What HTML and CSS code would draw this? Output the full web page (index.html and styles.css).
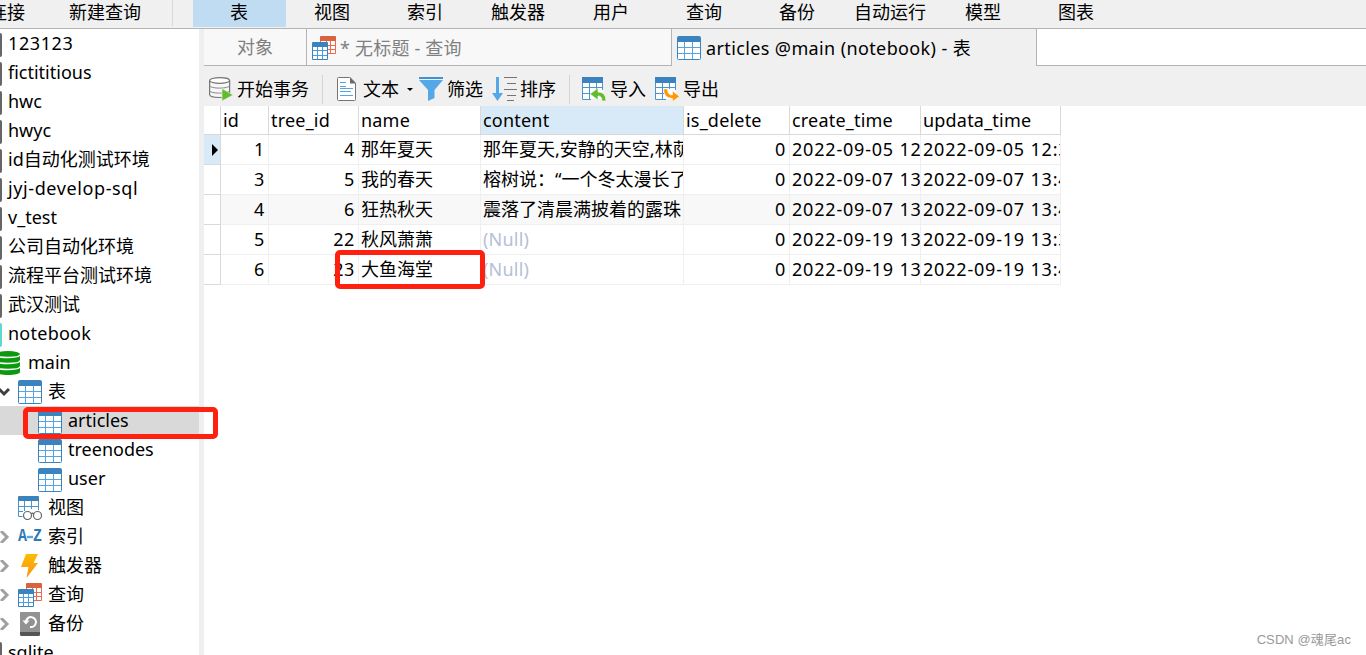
FILE: index.html
```html
<!DOCTYPE html>
<html lang="zh-CN">
<head>
  <meta charset="UTF-8" />
  <meta name="viewport" content="width=device-width, initial-scale=1.0"/>
  <title>articles @main (notebook) - 表</title>
  <link rel="stylesheet" href="styles.css">
</head>
<body>
  <!-- icons -->
  <svg class="defs" width="0" height="0">
    <linearGradient id="bolt-fill" x1="0" y1="0" x2="0" y2="1">
      <stop offset="0" stop-color="#f9bd00"/><stop offset="1" stop-color="#ff9114"/>
    </linearGradient>
    <symbol id="i-table" viewBox="0 0 24 24">
      <path fill="#fff" stroke="#3b83be" d="M.5 5h23v17.5a1 1 0 0 1-1 1h-21a1 1 0 0 1-1-1z"/>
      <path stroke="#55a5e4" d="M1 11.5h22M1 17.5h22M7.5 6v17M15.500 6v17"/>
      <path fill="#3b83be" d="M0 6V2q0-2 2-2h20q2 0 2 2v4z"/>
    </symbol>
    <symbol id="i-query" viewBox="0 0 24 24">
      <path fill="#fff" stroke="#e96b50" d="M8.500 1.500h15v16h-15z"/>
      <path stroke="#e96b50" d="M9 9.500h14M9 13.500h14M14.500 5v12M18.500 5v12"/>
      <path fill="#d9623f" d="M8 5V1q0-1 1-1h14q1 0 1 1v4z"/>
      <path fill="#fff" stroke="#3b83be" d="M.5 7.500h15v16H.5z"/>
      <path stroke="#4a9ede" d="M1 14.500h14M1 19.500h14M5.500 11v12M10.500 11v12"/>
      <path fill="#3b83be" d="M0 11V7q0-1 1-1h14q1 0 1 1v4z"/>
    </symbol>
    <symbol id="i-view" viewBox="0 0 24 24">
      <path fill="#fff" d="M0 5h21v9H6v7H0z"/>
      <path fill="none" stroke="#4a94d0" d="M.5 5v15.500h4M20.500 5v9M1 10.500h19M1 15.500h4M6.500 5v10M13.500 5v8"/>
      <path fill="#3b83be" d="M0 5V1q0-1 1-1h19q1 0 1 1v4z"/>
      <g fill="#fff" stroke="#686868" stroke-width="1.200"><circle cx="9.500" cy="19.500" r="4"/><circle cx="19.500" cy="19.500" r="4"/><path d="M13 18q1.500-1.500 3 0"/></g>
    </symbol>
    <symbol id="i-bolt" viewBox="0 0 24 24">
      <path fill="url(#bolt-fill)" d="M8 0h12l-4.500 9H20L8.500 24l2-11H3z"/>
    </symbol>
    <symbol id="i-backup" viewBox="0 0 24 24">
      <rect x="2" width="20" height="24" rx="1.500" fill="#555"/>
      <path fill="#929292" d="M2 20V1.500Q2 0 3.500 0h17Q22 0 22 1.500V20z"/>
      <path fill="none" stroke="#fff" stroke-width="2" d="M8 9.500A5 5 0 1 1 12 15"/>
      <path fill="#fff" d="M4.500 8.500h7l-3.500 4z"/>
    </symbol>
    <symbol id="i-db" viewBox="0 0 24 24">
      <path fill="#0c980f" d="M0 3v18c0 4 24 4 24 0V3z"/>
      <ellipse cx="12" cy="3" rx="12" ry="3" fill="#0c980f"/>
      <path fill="none" stroke="#fff" stroke-width="1.500" d="M0 3.500c0 4 24 4 24 0M0 9.500c0 4 24 4 24 0M0 15.500c0 4 24 4 24 0"/>
    </symbol>
    <symbol id="i-begin" viewBox="0 0 24 24">
      <path fill="#f7f7f7" stroke="#747474" stroke-width="1.200" d="M.6 3.500v14c0 1.800 4.500 3 10 3s10-1.200 10-3v-14"/>
      <ellipse cx="10.600" cy="3.500" rx="10" ry="2.800" fill="#fff" stroke="#747474" stroke-width="1.200"/>
      <path fill="none" stroke="#888" d="M.6 8.500c0 3.500 20 3.500 20 0M.6 13.500c0 3.500 20 3.500 20 0"/>
      <path fill="#62bd2c" stroke="#f0f0f0" stroke-width=".6" d="M13 11.500L24 18l-11 6z"/>
    </symbol>
    <symbol id="i-text" viewBox="0 0 20 24">
      <path fill="#fff" stroke="#747474" d="M1.500.5h11L18.500 6v16.500q0 1-1 1h-16q-1 0-1-1v-21q0-1 1-1z"/>
      <path fill="#6c6c6c" d="M13 0l6 6.500h-6z"/>
      <path stroke="#55a5e4" d="M3 5.500h6M3 9.500h6M3 11.500h13M3 14.500h11M3 18.500h13"/>
    </symbol>
    <symbol id="i-filter" viewBox="0 0 24 24">
      <path fill="#3b94d9" d="M0 0h24v2H0z"/>
      <path fill="#55a8e8" d="M0 3h24l-8.500 10v8L9 24V13z"/>
    </symbol>
    <symbol id="i-sort" viewBox="0 0 25 24">
      <path fill="#55a8e8" d="M4 0h3v16h4L5.500 24 0 16h4z"/>
      <path stroke="#747474" d="M12 .5h13M15 6.500h9M12 12.500h13M15 18.500h9M15 23.500h7"/>
    </symbol>
    <symbol id="i-import" viewBox="0 0 24 24">
      <path fill="#fff" d="M0 5h21v17H0z"/>
      <path fill="none" stroke="#4a94d0" d="M20.500 5v8M.5 5v17.500H9M1 10.500h19M1 16.500h8M7.500 5v17M14.500 5v8"/>
      <path fill="#3b83be" d="M0 6V0h21v6z"/>
      <path fill="#62bd2c" stroke="#f5f5f5" stroke-width=".7" d="M8 17l8-6v4q8 0 8 9h-4q0-5-4-5v4z"/>
    </symbol>
    <symbol id="i-export" viewBox="0 0 24 24">
      <path fill="#fff" d="M0 5h21v17H0z"/>
      <path fill="none" stroke="#4a94d0" d="M20.500 5v8M.5 5v17.500H11M1 10.500h19M1 16.500h8M7.500 5v17M14.500 5v7"/>
      <path fill="#3b83be" d="M0 6V0h21v6z"/>
      <path fill="#ff9800" stroke="#f5f5f5" stroke-width=".7" d="M8.500 12h4q0 6 5 6v-4l7 5.500-7 5v-3q-9-.5-9-9.500z"/>
    </symbol>
  </svg>

  <nav class="menubar">
    <span class="connect">连接</span>
    <span class="new-query">新建查询</span>
    <div class="menu-items">
      <span class="active">表</span>
      <span>视图</span>
      <span>索引</span>
      <span>触发器</span>
      <span>用户</span>
      <span>查询</span>
      <span>备份</span>
      <span>自动运行</span>
      <span>模型</span>
      <span>图表</span>
    </div>
  </nav>

  <div class="workspace">
    <aside class="sidebar">
      <ul class="tree">
        <li class="conn num">123123</li>
        <li class="conn">fictititious</li>
        <li class="conn">hwc</li>
        <li class="conn">hwyc</li>
        <li class="conn">id自动化测试环境</li>
        <li class="conn wide">jyj-develop-sql</li>
        <li class="conn">v_test</li>
        <li class="conn">公司自动化环境</li>
        <li class="conn">流程平台测试环境</li>
        <li class="conn">武汉测试</li>
        <li class="conn open">notebook</li>
        <li class="db"><svg class="icon"><use href="#i-db"/></svg>main</li>
        <li class="group"><svg class="arrow down" viewBox="0 0 12 12"><path d="M1 3l5 5 5-5"/></svg><svg class="icon"><use href="#i-table"/></svg>表</li>
        <li class="leaf selected"><svg class="icon"><use href="#i-table"/></svg>articles</li>
        <li class="leaf"><svg class="icon"><use href="#i-table"/></svg>treenodes</li>
        <li class="leaf"><svg class="icon"><use href="#i-table"/></svg>user</li>
        <li class="group"><span class="arrow"></span><svg class="icon"><use href="#i-view"/></svg>视图</li>
        <li class="group"><svg class="arrow" viewBox="0 0 12 12"><path d="M3 0l6 6-6 6"/></svg><span class="icon az">A<i></i>Z</span>索引</li>
        <li class="group"><svg class="arrow" viewBox="0 0 12 12"><path d="M3 0l6 6-6 6"/></svg><svg class="icon"><use href="#i-bolt"/></svg>触发器</li>
        <li class="group"><svg class="arrow" viewBox="0 0 12 12"><path d="M3 0l6 6-6 6"/></svg><svg class="icon"><use href="#i-query"/></svg>查询</li>
        <li class="group"><svg class="arrow" viewBox="0 0 12 12"><path d="M3 0l6 6-6 6"/></svg><svg class="icon"><use href="#i-backup"/></svg>备份</li>
        <li class="conn">sqlite</li>
      </ul>
    </aside>

    <main>
      <div class="tabs">
        <div class="tab objects">对象</div>
        <div class="tab query"><svg class="icon"><use href="#i-query"/></svg><span>* 无标题 - 查询</span></div>
        <div class="tab current"><svg class="icon"><use href="#i-table"/></svg>articles @main (notebook) - 表</div>
        <div class="tab-rest"></div>
      </div>

      <div class="toolbar">
        <button class="begin"><svg class="icon"><use href="#i-begin"/></svg>开始事务</button>
        <i class="sep"></i>
        <button class="text"><svg class="icon"><use href="#i-text"/></svg>文本<b class="caret"></b></button>
        <button class="filter"><svg class="icon"><use href="#i-filter"/></svg>筛选</button>
        <button class="sort"><svg class="icon"><use href="#i-sort"/></svg>排序</button>
        <i class="sep"></i>
        <button class="import"><svg class="icon"><use href="#i-import"/></svg>导入</button>
        <button class="export"><svg class="icon"><use href="#i-export"/></svg>导出</button>
      </div>

      <table class="grid">
        <colgroup>
          <col class="c-mark"><col class="c-id"><col class="c-tree"><col class="c-name">
          <col class="c-content"><col class="c-del"><col class="c-create"><col class="c-update">
        </colgroup>
        <thead>
          <tr><th></th><th>id</th><th>tree_id</th><th>name</th><th class="sel">content</th><th>is_delete</th><th>create_time</th><th>updata_time</th></tr>
        </thead>
        <tbody>
          <tr>
            <td class="mark sel"><b class="pointer"></b></td><td class="n">1</td><td class="n">4</td><td>那年夏天</td>
            <td>那年夏天,安静的天空,林荫</td><td class="n">0</td><td class="date">2022-09-05 12</td><td class="date">2022-09-05 12:3</td>
          </tr>
          <tr>
            <td class="mark"></td><td class="n">3</td><td class="n">5</td><td>我的春天</td>
            <td>榕树说：<q>“</q>一个冬太漫长了</td><td class="n">0</td><td class="date">2022-09-07 13</td><td class="date">2022-09-07 13:4</td>
          </tr>
          <tr class="alt">
            <td class="mark"></td><td class="n">4</td><td class="n">6</td><td>狂热秋天</td>
            <td>震落了清晨满披着的露珠</td><td class="n">0</td><td class="date">2022-09-07 13</td><td class="date">2022-09-07 13:4</td>
          </tr>
          <tr>
            <td class="mark"></td><td class="n">5</td><td class="n">22</td><td>秋风萧萧</td>
            <td class="null">(Null)</td><td class="n">0</td><td class="date">2022-09-19 13</td><td class="date">2022-09-19 13:3</td>
          </tr>
          <tr>
            <td class="mark"></td><td class="n">6</td><td class="n">23</td><td>大鱼海堂</td>
            <td class="null">(Null)</td><td class="n">0</td><td class="date">2022-09-19 13</td><td class="date">2022-09-19 13:4</td>
          </tr>
        </tbody>
      </table>
    </main>
  </div>

  <div class="highlight highlight-tree"></div>
  <div class="highlight highlight-cell"></div>
  <div class="watermark">CSDN @魂尾ac</div>
</body>
</html>
```
FILE: styles.css
```css
:root {
  --bar: #f0f0f0;
  --line: #b4b4b4;
  --sel: #d8eaf8;
  --mark: #ff2010;
}

* {
  margin: 0;
  padding: 0;
  box-sizing: border-box;
}

body {
  height: 655px;
  overflow: hidden;
  position: relative;
  background: #fff;
  color: #000;
  font: 18px/24px "Noto Sans", "Noto Sans CJK SC", sans-serif;
  white-space: nowrap;
}

.defs {
  position: absolute;
}

.icon {
  width: 24px;
  height: 24px;
  flex: none;
}

/* top menu */
.menubar {
  display: flex;
  height: 29px;
  background: var(--bar);
  border-bottom: 1px solid var(--line);
}

.connect {
  margin-left: -11px;
  width: 80px;
}

.new-query {
  width: 104px;
  height: 26px;
  border-right: 1px solid #d9d9d9;
}

.menu-items {
  display: flex;
  margin-left: 20px;
}

.menu-items span {
  width: 93px;
  height: 27px;
  padding-right: 1px;
  text-align: center;
}

.menu-items .active {
  background: #c0dcf3;
}

.workspace {
  display: flex;
  height: 626px;
}

/* connection tree */
.sidebar {
  width: 204px;
  flex: none;
  border-right: 5px solid #efefef;
  overflow: hidden;
}

.tree {
  list-style: none;
}

.tree li {
  display: flex;
  align-items: center;
  height: 29px;
  padding-bottom: 2px;
}

.tree .conn::before {
  content: "";
  width: 2px;
  height: 24px;
  margin: 4px 6px 0 0;
  background: #666;
  border-radius: 0 2px 2px 0;
}

.tree .open::before {
  background: #5fd9cf;
}

.tree .num,
.tree .wide {
  letter-spacing: 0.6px;
}

.tree .open {
  letter-spacing: 0.25px;
}

.tree .db .icon {
  margin: 2px 8px 0 -4px;
}

.tree .group .icon {
  margin: 2px 6px 0 0;
}

.tree .leaf {
  padding-left: 38px;
}

.tree .leaf .icon {
  margin: 4px 6px 0 0;
}

.tree .selected {
  background: #d9d9d9;
}

.arrow {
  width: 12px;
  height: 12px;
  margin: 3px 8px 0 -2px;
  fill: none;
  stroke: #a0a0a0;
  stroke-width: 3;
}

.arrow.down {
  stroke: #404040;
}

.az {
  display: flex;
  align-items: center;
  justify-content: space-between;
  color: #2e79b5;
  font: bold 15px/24px "Liberation Mono", monospace;
  transform: scaleY(1.2);
}

.az i {
  width: 6px;
  height: 2px;
  background: #55a5e4;
}

main {
  flex: 1;
  min-width: 0;
}

/* document tabs */
.tabs {
  display: flex;
  height: 37px;
  background: var(--bar);
}

.tab {
  display: flex;
  align-items: center;
}

.objects,
.query {
  background: #f8f8f8;
  color: #808080;
  border-right: 1px solid var(--line);
  border-bottom: 1px solid var(--line);
}

.objects {
  width: 103px;
  justify-content: center;
}

.query {
  width: 365px;
  padding: 1px 5px 0;
}

.query span {
  margin-left: -1px;
  letter-spacing: 0.2px;
}

.current {
  width: 364px;
  padding-left: 5px;
  letter-spacing: 0.38px;
}

.tab .icon {
  margin-right: 5px;
}

.tab-rest {
  flex: 1;
  background: #fff;
  border-left: 1px solid var(--line);
  border-bottom: 1px solid var(--line);
}

.toolbar {
  display: flex;
  align-items: center;
  height: 40px;
  padding: 6px 0 0 5px;
  background: var(--bar);
}

.toolbar button {
  display: flex;
  align-items: center;
  border: none;
  background: none;
  font: inherit;
  color: inherit;
}

.toolbar .icon {
  margin-right: 4px;
}

.sep {
  width: 1px;
  height: 29px;
  margin: 0 12px 0 13px;
  background: #d4d4d4;
}

.toolbar .text .icon {
  width: 20px;
  margin: 0 6px 0 2px;
}

.caret {
  margin: 0 6px 0 8px;
  border: 3px solid transparent;
  border-top-color: #000;
  border-bottom: none;
}

.toolbar .sort {
  margin-left: 9px;
}

.toolbar .sort .icon {
  width: 25px;
  margin-right: 3px;
}

.toolbar .export {
  margin-left: 9px;
}

/* data grid */
.grid {
  width: 857px;
  table-layout: fixed;
  border-collapse: separate;
  border-spacing: 0;
}

.c-mark { width: 17px; }
.c-id { width: 48px; }
.c-tree { width: 90px; }
.c-name { width: 122px; }
.c-content { width: 203px; }
.c-del { width: 106px; }
.c-create { width: 131px; }
.c-update { width: 140px; }

.grid th,
.grid td {
  padding: 0 0 0 2px;
  overflow: hidden;
  text-align: left;
  font-weight: normal;
}

.grid th {
  height: 29px;
  border-right: 1px solid #d9d9d9;
  border-bottom: 1px solid #d9d9d9;
  letter-spacing: 0.2px;
}

.grid td {
  height: 30px;
  padding-bottom: 2px;
  border-right: 1px solid #efefef;
  border-bottom: 1px solid #efefef;
}

.grid .mark {
  padding-bottom: 0;
  border-color: #d9d9d9;
}

.grid .sel {
  background: var(--sel);
}

.grid .alt td:not(.mark) {
  background: #f8f8f8;
}

.grid .n {
  padding-right: 3px;
  text-align: right;
  letter-spacing: 0.6px;
}

.grid .date {
  letter-spacing: 0.8px;
}

.grid .null {
  color: #b4bfd8;
  letter-spacing: 0.2px;
}

.grid q {
  quotes: none;
}

.pointer {
  display: block;
  margin-left: 6px;
  width: 0;
  border: 6px solid transparent;
  border-left-color: #000;
  border-right: none;
}

/* red marker frames */
.highlight {
  position: absolute;
  border: 5px solid var(--mark);
  border-radius: 5px;
}

.highlight-tree {
  left: 23px;
  top: 407px;
  width: 195px;
  height: 32px;
}

.highlight-cell {
  left: 335px;
  top: 250px;
  width: 150px;
  height: 39px;
}

.watermark {
  position: absolute;
  right: 15px;
  bottom: 3px;
  color: #999;
  font: 13px/24px "Liberation Sans", "Noto Sans CJK SC", sans-serif;
  letter-spacing: 0.1px;
}
```
